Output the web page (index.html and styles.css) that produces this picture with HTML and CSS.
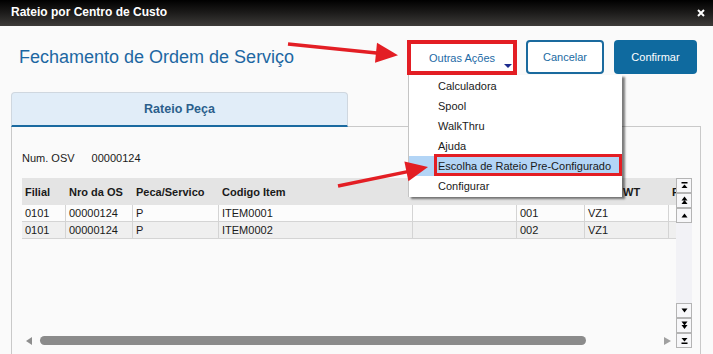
FILE: index.html
```html
<!DOCTYPE html>
<html lang="pt">
<head>
<meta charset="utf-8">
<title>Rateio por Centro de Custo</title>
<link rel="stylesheet" href="styles.css">
</head>
<body>
<div class="titlebar">
  <span class="title">Rateio por Centro de Custo</span>
  <svg class="close" width="8" height="8" viewBox="0 0 8 8"><path d="M1 1L7 7M7 1L1 7" stroke="#fff" stroke-width="2"/></svg>
</div>
<div class="header">
  <h1>Fechamento de Ordem de Serviço</h1>
  <div class="actions">
    <div class="menu-wrap">
      <button class="btn btn-outras">Outras Ações<span class="caret"></span></button>
      <ul class="menu">
        <li>Calculadora</li>
        <li>Spool</li>
        <li>WalkThru</li>
        <li>Ajuda</li>
        <li class="active">Escolha de Rateio Pre-Configurado<span class="red-box"></span></li>
        <li>Configurar</li>
      </ul>
    </div>
    <button class="btn btn-outline">Cancelar</button>
    <button class="btn btn-primary">Confirmar</button>
  </div>
</div>
<div class="tabs">
  <div class="tab">Rateio Peça</div>
</div>
<div class="panel">
  <div class="field">Num. OSV<span class="field-value">00000124</span></div>
  <div class="grid-wrap">
    <div class="grid-area">
      <div class="table-clip">
        <table class="grid">
          <colgroup>
            <col class="c1"><col class="c2"><col class="c3"><col class="c4"><col class="c5"><col class="c6"><col class="c7"><col class="c8">
          </colgroup>
          <thead>
            <tr><th>Filial</th><th>Nro da OS</th><th>Peca/Servico</th><th>Codigo Item</th><th></th><th></th><th class="wt">WT</th><th>F</th></tr>
          </thead>
          <tbody>
            <tr><td>0101</td><td>00000124</td><td>P</td><td>ITEM0001</td><td></td><td>001</td><td>VZ1</td><td></td></tr>
            <tr class="alt"><td>0101</td><td>00000124</td><td>P</td><td>ITEM0002</td><td></td><td>002</td><td>VZ1</td><td></td></tr>
          </tbody>
        </table>
      </div>
      <div class="hscroll">
        <span class="arrow-left"></span>
        <span class="thumb"></span>
        <span class="arrow-right"></span>
      </div>
    </div>
    <div class="vscroll">
      <div class="vbtn"><svg width="9" height="9" viewBox="0 0 9 9"><rect x="1.5" y="1" width="6" height="1.5" fill="#000"/><path d="M4.5 3.5L7.5 7H1.5Z" fill="#000"/></svg></div>
      <div class="vbtn"><svg width="9" height="9" viewBox="0 0 9 9"><path d="M4.5 0.5L7.5 4.5H1.5Z" fill="#000"/><path d="M4.5 4L7.5 8H1.5Z" fill="#000"/></svg></div>
      <div class="vbtn"><svg width="9" height="9" viewBox="0 0 9 9"><path d="M4.5 2.5L7.5 6.5H1.5Z" fill="#000"/></svg></div>
      <div class="vtrack"></div>
      <div class="vbtn"><svg width="9" height="9" viewBox="0 0 9 9"><path d="M4.5 6.5L7.5 2.5H1.5Z" fill="#000"/></svg></div>
      <div class="vbtn"><svg width="9" height="9" viewBox="0 0 9 9"><path d="M4.5 4.5L7.5 0.5H1.5Z" fill="#000"/><path d="M4.5 8L7.5 4H1.5Z" fill="#000"/></svg></div>
      <div class="vbtn"><svg width="9" height="9" viewBox="0 0 9 9"><path d="M4.5 5.5L7.5 2H1.5Z" fill="#000"/><rect x="1.5" y="6.5" width="6" height="1.5" fill="#000"/></svg></div>
    </div>
  </div>
</div>
<svg class="annotations" width="713" height="354" viewBox="0 0 713 354">
  <line x1="288" y1="44" x2="379" y2="53.3" stroke="#e31e24" stroke-width="3.5"/>
  <polygon points="398,55.2 377,42.8 375,62.8" fill="#e31e24"/>
  <line x1="338" y1="186" x2="409" y2="171.4" stroke="#e31e24" stroke-width="3.5"/>
  <polygon points="428,167 404.4,161.6 408.4,181.2" fill="#e31e24"/>
</svg>
</body>
</html>
```

FILE: styles.css
```css
* { box-sizing: border-box; }
html, body { margin: 0; padding: 0; }
body {
  background: #fafafa;
  font-family: "Liberation Sans", Arial, sans-serif;
  width: 713px;
  height: 354px;
  overflow: hidden;
  position: relative;
  color: #1a1a1a;
}

.titlebar {
  height: 26px;
  background: linear-gradient(#000 0%, #1a1918 45%, #3d3b39 100%);
  display: flex;
  align-items: center;
  justify-content: space-between;
  padding: 0 8px 3px 11px;
  color: #fff;
  font-weight: bold;
  font-size: 12px;
}
.close { display: block; margin-top: 2px; }

.header {
  height: 66px;
  display: flex;
  justify-content: space-between;
  align-items: flex-start;
  padding: 14px 16px 0 19px;
}
.header h1 {
  margin: 0;
  font-size: 18px;
  font-weight: normal;
  color: #1d67a2;
  line-height: 34px;
}
.actions { display: flex; align-items: flex-start; }
.menu-wrap { position: relative; margin-right: 9px; }

.btn {
  height: 34px;
  font-family: "Liberation Sans", Arial, sans-serif;
  font-size: 11px;
  border-radius: 4px;
  padding: 0;
  display: block;
}
.btn-outras {
  width: 110px;
  height: 35px;
  border: 4px solid #e31e24;
  border-radius: 0;
  background: #fff;
  color: #1d6aa6;
  position: relative;
}
.caret {
  position: absolute;
  right: 1px;
  bottom: 3px;
  width: 0;
  height: 0;
  border-left: 4px solid transparent;
  border-right: 4px solid transparent;
  border-top: 4px solid #1c2b8e;
}
.btn-outline {
  width: 78px;
  border: 2px solid #1a6a9e;
  background: #fff;
  color: #1a6aa2;
  margin-right: 10px;
}
.btn-primary {
  width: 83px;
  border: none;
  background: #0f6a9f;
  color: #fff;
}

.menu {
  position: absolute;
  top: 35px;
  left: 1px;
  width: 214px;
  margin: 0;
  padding: 1px 0 1px;
  list-style: none;
  background: #fff;
  border-left: 1px solid #c4c4c4;
  box-shadow: 3px 2px 2px rgba(0, 0, 0, 0.5);
  z-index: 10;
}
.menu li {
  position: relative;
  height: 20px;
  line-height: 20px;
  padding-left: 29px;
  font-size: 11px;
  color: #1a1a1a;
  white-space: nowrap;
}
.menu li.active { background: #b3d5f6; }
.red-box {
  position: absolute;
  left: 25px;
  right: 0;
  top: -2px;
  bottom: 0;
  border: 3px solid #e31e24;
}

.tabs {
  display: flex;
  margin: 0 12px 0 11px;
  position: relative;
  z-index: 1;
}
.tab {
  width: 337px;
  height: 35px;
  border: 1px solid #cfd7df;
  border-bottom: 2px solid #1a6aa0;
  border-radius: 4px 4px 0 0;
  background: #e1edf8;
  color: #2b5f8c;
  font-weight: bold;
  font-size: 12.5px;
  display: flex;
  align-items: center;
  justify-content: center;
  margin-bottom: -1px;
}

.panel {
  margin: 0 12px 0 11px;
  border: 1px solid #c9c9c9;
  border-bottom: none;
  height: 240px;
  padding: 24px 8px 0 10px;
}
.field {
  font-size: 11px;
  line-height: 14px;
  color: #1a1a1a;
}
.field-value { margin-left: 17px; }

.grid-wrap {
  margin-top: 13px;
  display: flex;
  height: 170px;
}
.grid-area {
  width: 654px;
  display: flex;
  flex-direction: column;
}
.table-clip { overflow: hidden; width: 654px; }
.grid {
  border-collapse: separate;
  border-spacing: 0;
  table-layout: fixed;
  width: 727px;
  font-size: 11px;
}
.c1 { width: 44px; }
.c2 { width: 67px; }
.c3 { width: 86px; }
.c4 { width: 194px; }
.c5 { width: 104px; }
.c6 { width: 68px; }
.c7 { width: 84px; }
.c8 { width: 80px; }
.grid th {
  height: 27px;
  background: #e4e4e4;
  text-align: left;
  padding: 0 0 0 3px;
  font-weight: bold;
  color: #1a1a1a;
  white-space: nowrap;
  overflow: hidden;
}
.grid th.wt { padding-left: 38px; }
.grid td {
  height: 17px;
  line-height: 16px;
  padding: 0 0 0 3px;
  border-right: 1px solid #d4d4d4;
  border-bottom: 1px solid #d4d4d4;
  color: #1a1a1a;
  white-space: nowrap;
  overflow: hidden;
  background: #fcfcfc;
}
.grid tr.alt td { background: #efefef; }

.hscroll {
  margin-top: auto;
  margin-bottom: 3px;
  height: 9px;
  display: flex;
  align-items: center;
  padding: 0 5px 0 4px;
}
.arrow-left {
  width: 0; height: 0;
  border-top: 4px solid transparent;
  border-bottom: 4px solid transparent;
  border-right: 6px solid #8e8e8e;
}
.thumb {
  margin-left: 8px;
  width: 546px;
  height: 9px;
  border-radius: 5px;
  background: #8b8b8b;
}
.arrow-right {
  margin-left: auto;
  width: 0; height: 0;
  border-top: 4px solid transparent;
  border-bottom: 4px solid transparent;
  border-left: 7px solid #a0a0a0;
}

.vscroll {
  width: 16px;
  display: flex;
  flex-direction: column;
  background: #f2f2f6;
}
.vbtn {
  height: 15px;
  border: 1px solid #b4b4b4;
  background: #f7f7f9;
  display: flex;
  align-items: center;
  justify-content: center;
}
.vbtn svg { display: block; }
.vtrack { flex: 1; }

.annotations {
  position: absolute;
  top: 0;
  left: 0;
  z-index: 20;
  pointer-events: none;
}
```
